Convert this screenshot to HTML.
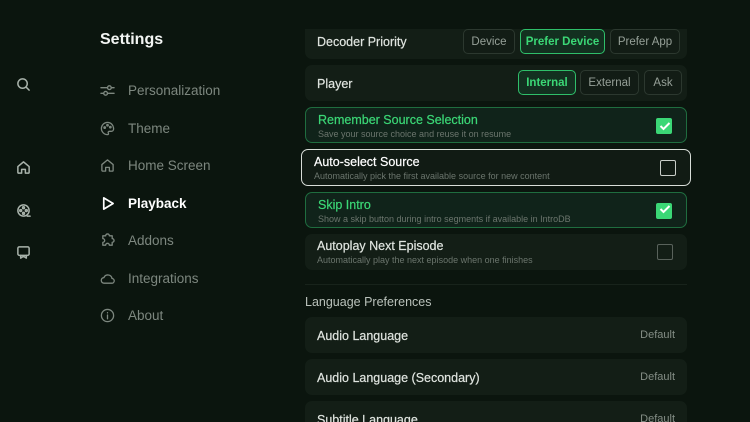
<!DOCTYPE html>
<html><head><meta charset="utf-8"><style>
*{margin:0;padding:0;box-sizing:border-box}
body{width:750px;height:422px;overflow:hidden;background:#0b150e;font-family:"Liberation Sans",sans-serif;position:relative;color:#e8ece8}
.abs{position:absolute}
.rail svg{position:absolute;left:16px;width:15px;height:15px;stroke:#a9b3ab;fill:none;stroke-width:1.6;stroke-linecap:round;stroke-linejoin:round}
h1{position:absolute;left:100px;top:31px;font-size:16px;font-weight:bold;color:#f3f5f3}
.nav{position:absolute;left:100px;font-size:13.5px;color:#7d877f;display:flex;align-items:center}
.nav svg{width:15px;height:15px;stroke:#7d877f;fill:none;stroke-width:1.4;margin-right:13px;stroke-linecap:round;stroke-linejoin:round}
.nav.on{color:#fff;font-weight:bold}.nav.on svg{stroke:#fff}
.clip{position:absolute;left:0;top:29px;width:750px;height:393px;overflow:hidden}
.card{position:absolute;left:305px;width:382px;background:#131e16;border-radius:7px}
.t{position:absolute;left:12px;font-size:12.5px;color:#dfe4df;-webkit-text-stroke:0.2px currentColor}
.s{position:absolute;left:12px;font-size:9px;color:#6b756d}
.btn{position:absolute;height:25px;border:1px solid #2c382f;border-radius:5px;font-size:11.5px;color:#96a098;display:flex;align-items:center;justify-content:center;background:#121c15}
.btn.on{border:1.5px solid #2fbf6a;color:#3bd776;font-weight:bold;background:#133020}
.g{border:1px solid #1f6d3f;background:#10231a}
.g .t{color:#3bd776}
.cb{position:absolute;right:14px;width:16px;height:16px;border-radius:2px}
.cb.y{background:#3bd776}
.cb.n{border:1.5px solid #59625b}
.def{position:absolute;right:12px;font-size:11px;color:#848e86}
</style></head><body>
<div class="rail">
<svg style="top:77px" viewBox="0 0 16 16"><circle cx="7" cy="7" r="5"/><path d="M11 11l3 3"/></svg>
<svg style="top:160px" viewBox="0 0 16 16"><path d="M2 7l6-5 6 5v6a1 1 0 0 1-1 1h-3v-4H6v4H3a1 1 0 0 1-1-1z"/></svg>
<svg style="top:203px" viewBox="0 0 16 16"><circle cx="8" cy="8" r="6"/><circle cx="8" cy="5" r="1"/><circle cx="5" cy="8" r="1"/><circle cx="11" cy="8" r="1"/><circle cx="8" cy="11" r="1"/><path d="M12 14h3"/></svg>
<svg style="top:245px" viewBox="0 0 16 16"><rect x="2" y="2" width="12" height="9" rx="1.5"/><path d="M5 11v3l3-2 3 2v-3"/></svg>
</div>
<h1>Settings</h1>
<div class="nav" style="top:83px"><svg viewBox="0 0 16 16"><path d="M1 5h7M12 5h3M1 11h3M8 11h7"/><circle cx="10" cy="5" r="2"/><circle cx="6" cy="11" r="2"/></svg>Personalization</div>
<div class="nav" style="top:121px"><svg viewBox="0 0 16 16"><path d="M8 1.5a6.5 6.5 0 1 0 0 13c1 0 1.3-.8.9-1.5-.5-.9 0-2 1.1-2H12a2.5 2.5 0 0 0 2.5-2.5C14.5 4.4 11.6 1.5 8 1.5z"/><circle cx="5" cy="7" r=".8"/><circle cx="8" cy="4.5" r=".8"/><circle cx="11" cy="6.5" r=".8"/></svg>Theme</div>
<div class="nav" style="top:158px"><svg viewBox="0 0 16 16"><path d="M2 7l6-5 6 5v6a1 1 0 0 1-1 1h-3v-4H6v4H3a1 1 0 0 1-1-1z"/></svg>Home Screen</div>
<div class="nav on" style="top:196px"><svg viewBox="0 0 16 16" style="stroke-width:1.8"><path d="M4 2l10 6-10 6z"/></svg>Playback</div>
<div class="nav" style="top:233px"><svg viewBox="0 0 16 16"><path d="M6 3a2 2 0 0 1 4 0h3v3a2 2 0 0 1 0 4v3h-3a2 2 0 0 0-4 0H3v-3a2 2 0 0 0 0-4V3z"/></svg>Addons</div>
<div class="nav" style="top:271px"><svg viewBox="0 0 16 16"><path d="M4.5 13a3 3 0 0 1-.3-6A4.5 4.5 0 0 1 12.8 8a2.5 2.5 0 0 1-.3 5z"/></svg>Integrations</div>
<div class="nav" style="top:308px"><svg viewBox="0 0 16 16"><circle cx="8" cy="8" r="6.5"/><path d="M8 7.5v4M8 5v.2"/></svg>About</div>

<div class="clip">
<div class="card" style="top:-10px;height:40px"><div class="t" style="top:16px">Decoder Priority</div>
<div class="btn" style="left:158px;top:10px;width:52px">Device</div>
<div class="btn on" style="left:215px;top:10px;width:85px">Prefer Device</div>
<div class="btn" style="left:305px;top:10px;width:70px">Prefer App</div></div>
<div class="card" style="top:36px;height:36px"><div class="t" style="top:12px">Player</div>
<div class="btn on" style="left:213px;top:5px;width:58px">Internal</div>
<div class="btn" style="left:275px;top:5px;width:59px">External</div>
<div class="btn" style="left:339px;top:5px;width:38px">Ask</div></div>
<div class="card g" style="top:78px;height:36px"><div class="t" style="top:5px">Remember Source Selection</div><div class="s" style="top:21px">Save your source choice and reuse it on resume</div><div class="cb y" style="top:10px"></div></div>
<div class="card" style="left:301px;width:390px;top:120px;height:37px;border:1.5px solid #d8ddd8;background:#111b14"><div class="t" style="top:5px;color:#fff">Auto-select Source</div><div class="s" style="top:21px">Automatically pick the first available source for new content</div><div class="cb n" style="top:10px;border-color:#c9cec9"></div></div>
<div class="card g" style="top:163px;height:36px"><div class="t" style="top:5px">Skip Intro</div><div class="s" style="top:21px">Show a skip button during intro segments if available in IntroDB</div><div class="cb y" style="top:10px"></div></div>
<div class="card" style="top:205px;height:36px"><div class="t" style="top:5px">Autoplay Next Episode</div><div class="s" style="top:21px">Automatically play the next episode when one finishes</div><div class="cb n" style="top:10px"></div></div>
<div class="abs" style="left:305px;top:255px;width:382px;height:1px;background:#18231b"></div>
<div class="abs" style="left:305px;top:266px;font-size:12.5px;color:#b9c1ba">Language Preferences</div>
<div class="card" style="top:288px;height:36px"><div class="t" style="top:12px">Audio Language</div><div class="def" style="top:12px">Default</div></div>
<div class="card" style="top:330px;height:36px"><div class="t" style="top:12px">Audio Language (Secondary)</div><div class="def" style="top:12px">Default</div></div>
<div class="card" style="top:372px;height:36px"><div class="t" style="top:12px">Subtitle Language</div><div class="def" style="top:12px">Default</div></div>
</div>
<svg class="abs" style="left:657px;top:118px" width="16" height="16" viewBox="0 0 16 16"><path d="M3.5 8l3 3 6-6" stroke="#fff" stroke-width="2" fill="none"/></svg>
<svg class="abs" style="left:657px;top:201px" width="16" height="16" viewBox="0 0 16 16"><path d="M3.5 8l3 3 6-6" stroke="#fff" stroke-width="2" fill="none"/></svg>
</body></html>
